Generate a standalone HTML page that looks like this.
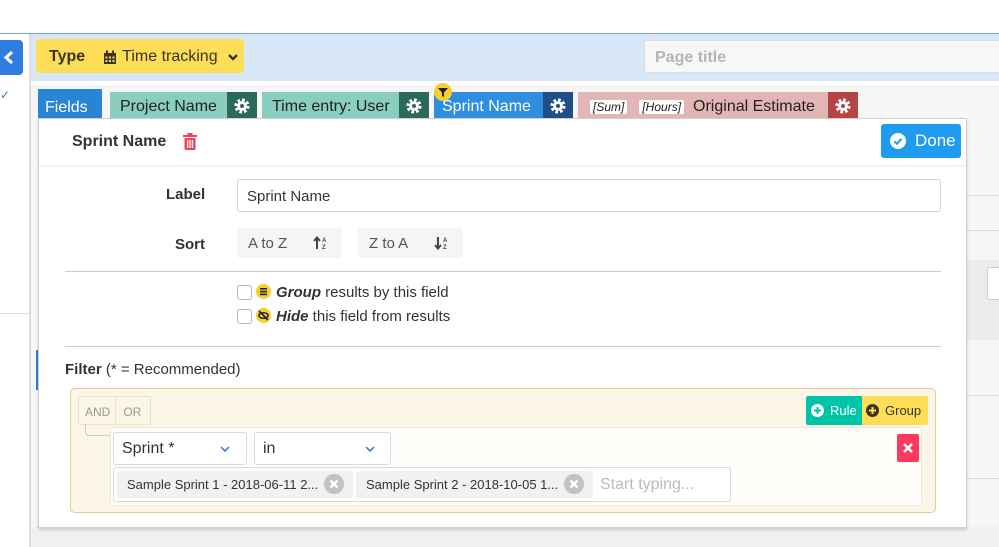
<!DOCTYPE html>
<html><head><meta charset="utf-8"><style>
*{box-sizing:border-box;margin:0;padding:0}
body{width:999px;height:547px;overflow:hidden;background:#fff;font-family:"Liberation Sans",sans-serif;color:#363636;position:relative}
.a{position:absolute}
.gear{display:flex;align-items:center;justify-content:center}
.tab{position:absolute;top:92px;height:27px;font-size:16px;display:flex;align-items:center;padding-left:10px;padding-top:3px;color:#222}
.btn{position:absolute;background:#f5f5f5;border-radius:3px;font-size:15px;color:#555;display:flex;align-items:center}
.sel{position:absolute;background:#fff;border:1px solid #dbdbdb;border-radius:3px;font-size:16px;display:flex;align-items:center;padding-left:8px;color:#333}
.chip{position:absolute;top:471px;height:27px;background:#f1f1f1;border-radius:3px;font-size:13px;color:#333;display:flex;align-items:center;padding-left:10px}
.x{position:absolute;width:19px;height:19px;border-radius:50%;background:#c2c2c2;color:#fff;font-size:13px;font-weight:bold;text-align:center;line-height:19px}
.cb{position:absolute;width:15px;height:15px;border:1px solid #b5b5b5;border-radius:3px;background:#fff}
</style></head><body>
<svg width="0" height="0" style="position:absolute"><defs>
<g id="g"><circle cx="8" cy="8" r="6" fill="none" stroke="#fff" stroke-width="3.2" stroke-dasharray="2.6 2.1"/><circle cx="8" cy="8" r="5" fill="#fff"/></g>
<path id="chev" d="M2 4 L6 8 L10 4" fill="none" stroke="#3273dc" stroke-width="1.5"/>
</defs></svg>
<!-- top -->
<div class="a" style="left:0;top:33px;width:999px;height:1px;background:#7aa6e0"></div>
<div class="a" style="left:30px;top:34px;width:969px;height:47px;background:#d8e7f7"></div>
<div class="a" style="left:0;top:40px;width:23px;height:35px;background:#2f7de1;border-radius:0 4px 4px 0"><svg width="23" height="35"><path d="M12 12 L6 17.5 L12 23" fill="none" stroke="#fff" stroke-width="3"/></svg></div>
<div class="a" style="left:0;top:88px;color:#2f7de1;font-size:12px">✓</div>
<div class="a" style="left:29px;top:34px;width:2px;height:513px;background:#ddd"></div>
<div class="a" style="left:0;top:313px;width:30px;height:1px;background:#ddd"></div>
<div class="a" style="left:36px;top:39px;width:208px;height:34px;background:#fedd58;border-radius:3px;font-size:16px;color:#3b3520;display:flex;align-items:center;padding-left:13px;padding-top:2px"><b>Type</b>
<svg style="margin-left:18px;margin-right:5px" width="14" height="15" viewBox="0 0 14 15"><rect x="1" y="3" width="12" height="11" fill="#3b3520"/><rect x="3" y="0.5" width="2" height="4" fill="#3b3520"/><rect x="9" y="0.5" width="2" height="4" fill="#3b3520"/><g fill="#fedd58"><rect x="2.5" y="6.5" width="2" height="2"/><rect x="6" y="6.5" width="2" height="2"/><rect x="9.5" y="6.5" width="2" height="2"/><rect x="2.5" y="10" width="2" height="2"/><rect x="6" y="10" width="2" height="2"/><rect x="9.5" y="10" width="2" height="2"/></g></svg>Time tracking
<svg style="margin-left:9px" width="12" height="10"><path d="M2 3 L6 7 L10 3" fill="none" stroke="#3b3520" stroke-width="2.4"/></svg></div>
<div class="a" style="left:644px;top:40px;width:360px;height:33px;background:#f7f7f7;border:1px solid #ddd;border-radius:3px;font-size:16px;color:#b5b5b5;font-weight:bold;padding:8px 0 0 10px">Page title</div>
<div class="a" style="left:31px;top:82px;width:968px;height:3px;background:#fff"></div>
<div class="a" style="left:31px;top:85px;width:968px;height:462px;background:#f6f6f6"></div>
<div class="a" style="left:966px;top:195px;width:33px;height:1px;background:#ddd"></div>
<div class="a" style="left:966px;top:230px;width:33px;height:1px;background:#ddd"></div>
<div class="a" style="left:966px;top:260px;width:33px;height:80px;background:#ececec"></div>
<div class="a" style="left:987px;top:267px;width:14px;height:33px;background:#fff;border:1px solid #ccc;border-radius:3px"></div>
<div class="a" style="left:966px;top:395px;width:33px;height:1px;background:#ddd"></div>
<div class="a" style="left:966px;top:478px;width:33px;height:1px;background:#ddd"></div>
<div class="a" style="left:31px;top:527px;width:968px;height:20px;background:#f0f0f0"></div>
<div class="a" style="left:36px;top:350px;width:3px;height:40px;background:#2f7de1"></div>
<!-- tabs -->
<div class="a" style="left:38px;top:89px;width:64px;height:32px;background:#2a84d6;color:#fff;font-size:16px;padding:10px 0 0 7px">Fields</div>
<div class="tab" style="left:110px;width:147px;background:#89cfc0">Project Name</div>
<div class="a gear" style="left:227px;top:92px;width:30px;height:27px;background:#2b6a5a"><svg width="16" height="16"><use href="#g"/><circle cx="8" cy="8" r="2" fill="#2b6a5a"/></svg></div>
<div class="tab" style="left:262px;width:167px;background:#89cfc0">Time entry: User</div>
<div class="a gear" style="left:399px;top:92px;width:30px;height:27px;background:#2b6a5a"><svg width="16" height="16"><use href="#g"/><circle cx="8" cy="8" r="2" fill="#2b6a5a"/></svg></div>
<div class="tab" style="left:434px;width:139px;background:#2f8ee0;color:#fff;padding-left:8px">Sprint Name</div>
<div class="a gear" style="left:543px;top:92px;width:30px;height:27px;background:#1f4f85"><svg width="16" height="16"><use href="#g"/><circle cx="8" cy="8" r="2" fill="#1f4f85"/></svg></div>
<div class="a" style="left:434px;top:83px;width:18px;height:18px;border-radius:50%;background:#f5cf2a"><svg width="18" height="18"><path d="M4 5 H14 L10 9.5 V14 L8 13 V9.5 Z" fill="#222"/></svg></div>
<div class="tab" style="left:578px;width:280px;background:#e3b6b6;padding-left:12px"><i style="font-size:12px;background:#fff;padding:0 3px;border-radius:2px">[Sum]</i><i style="font-size:12px;background:#fff;padding:0 3px;border-radius:2px;margin-left:12px">[Hours]</i><span style="margin-left:9px">Original Estimate</span></div>
<div class="a gear" style="left:828px;top:92px;width:30px;height:27px;background:#b54444"><svg width="16" height="16"><use href="#g"/><circle cx="8" cy="8" r="2" fill="#b54444"/></svg></div>
<!-- popup -->
<div class="a" style="left:38px;top:118px;width:929px;height:410px;background:#fff;border:1px solid #d0d0d0;box-shadow:0 2px 3px rgba(0,0,0,.15)"></div>
<div class="a" style="left:72px;top:133px;font-size:16px;font-weight:bold;color:#333">Sprint Name</div>
<svg class="a" style="left:182px;top:133px" width="16" height="17" viewBox="0 0 16 17"><rect x="1" y="2" width="14" height="2" fill="#f0405a"/><rect x="5.5" y="0" width="5" height="2.5" fill="#f0405a"/><path d="M2.5 5 H13.5 V15.5 Q13.5 17 12 17 H4 Q2.5 17 2.5 15.5 Z" fill="#f0405a"/><g fill="#fff"><rect x="5" y="7" width="1.3" height="8"/><rect x="7.4" y="7" width="1.3" height="8"/><rect x="9.8" y="7" width="1.3" height="8"/></g></svg>
<div class="a" style="left:881px;top:124px;width:80px;height:34px;background:#209cee;border-radius:3px;color:#fff;font-size:17px;display:flex;align-items:center;padding-left:9px"><svg width="16" height="16" style="margin-right:9px"><circle cx="8" cy="8" r="8" fill="#fff"/><path d="M4.5 8.3 L7 10.8 L11.5 5.8" fill="none" stroke="#209cee" stroke-width="2"/></svg>Done</div>
<div class="a" style="left:39px;top:165px;width:927px;height:2px;background:#f2f2f2"></div>
<div class="a" style="left:166px;top:186px;font-size:15px;font-weight:bold;color:#333">Label</div>
<div class="a" style="left:237px;top:179px;width:704px;height:33px;border:1px solid #d5d5d5;border-radius:3px;font-size:15px;padding:8px 0 0 9px;color:#333">Sprint Name</div>
<div class="a" style="left:175px;top:236px;font-size:15px;font-weight:bold;color:#333">Sort</div>
<div class="btn" style="left:237px;top:228px;width:105px;height:30px;padding-left:11px">A to Z<svg style="margin-left:26px" width="16" height="14"><path d="M4 13 V2 M1 5 L4 1.5 L7 5" fill="none" stroke="#444" stroke-width="2"/><text x="9" y="6" font-size="6" font-family="Liberation Sans" font-weight="bold" fill="#444">A</text><text x="9" y="13" font-size="6" font-family="Liberation Sans" font-weight="bold" fill="#444">Z</text></svg></div>
<div class="btn" style="left:358px;top:228px;width:105px;height:30px;padding-left:11px">Z to A<svg style="margin-left:26px" width="16" height="14"><path d="M4 1 V12 M1 9 L4 12.5 L7 9" fill="none" stroke="#444" stroke-width="2"/><text x="9" y="6" font-size="6" font-family="Liberation Sans" font-weight="bold" fill="#444">A</text><text x="9" y="13" font-size="6" font-family="Liberation Sans" font-weight="bold" fill="#444">Z</text></svg></div>
<div class="a" style="left:65px;top:271px;width:876px;height:1px;background:#ccc"></div>
<div class="cb" style="left:237px;top:285px"></div>
<svg class="a" style="left:256px;top:284px" width="15" height="15"><circle cx="7.5" cy="7.5" r="7.5" fill="#f5cf2a"/><g fill="#222"><rect x="4" y="4" width="7" height="1.6"/><rect x="4" y="6.8" width="7" height="1.6"/><rect x="4" y="9.6" width="7" height="1.6"/></g></svg>
<div class="a" style="left:276px;top:284px;font-size:15px;color:#333"><b><i>Group</i></b> results by this field</div>
<div class="cb" style="left:237px;top:309px"></div>
<svg class="a" style="left:256px;top:308px" width="15" height="15"><circle cx="7.5" cy="7.5" r="7.5" fill="#f5cf2a"/><ellipse cx="7.5" cy="7.5" rx="4.5" ry="2.8" fill="none" stroke="#222" stroke-width="1.5"/><path d="M3 3 L12 12" stroke="#222" stroke-width="1.6"/></svg>
<div class="a" style="left:276px;top:308px;font-size:15px;color:#333"><b><i>Hide</i></b> this field from results</div>
<div class="a" style="left:65px;top:346px;width:876px;height:1px;background:#ccc"></div>
<div class="a" style="left:65px;top:361px;font-size:15px;color:#333"><b>Filter</b> (* = Recommended)</div>
<!-- filter -->
<div class="a" style="left:70px;top:388px;width:866px;height:125px;background:#fcf6e8;border:1px solid #e3cd90;border-radius:5px"></div>
<div class="a" style="left:78px;top:396px;width:73px;height:29px;border:1px solid #eee3c8;border-radius:2px;font-size:12px;color:#999;display:flex"><span style="padding:8px 5px 0 6px;border-right:1px solid #eee3c8">AND</span><span style="padding:8px 0 0 7px">OR</span></div>
<div class="a" style="left:85px;top:424px;width:26px;height:12px;border-left:1px solid #ccc;border-bottom:1px solid #ccc;border-radius:0 0 0 4px"></div>
<div class="a" style="left:806px;top:396px;width:56px;height:29px;background:#00c4a7;color:#fff;font-size:13px;display:flex;align-items:center;padding-left:5px;border-radius:2px 0 0 2px"><svg width="13" height="13" style="margin-right:6px"><circle cx="6.5" cy="6.5" r="6.5" fill="#fff"/><path d="M6.5 3 V10 M3 6.5 H10" stroke="#00c4a7" stroke-width="2"/></svg>Rule</div>
<div class="a" style="left:862px;top:396px;width:66px;height:29px;background:#fedd58;color:#3b3520;font-size:13px;display:flex;align-items:center;padding-left:4px;border-radius:0 2px 2px 0"><svg width="13" height="13" style="margin-right:6px"><circle cx="6.5" cy="6.5" r="6.5" fill="#3b3520"/><path d="M6.5 3 V10 M3 6.5 H10" stroke="#fedd58" stroke-width="2"/></svg>Group</div>
<div class="a" style="left:110px;top:427px;width:812px;height:79px;background:#fffdf9;border:1px solid #efe8d8;border-radius:3px"></div>
<div class="sel" style="left:113px;top:432px;width:134px;height:33px">Sprint *<svg style="position:absolute;left:105px;top:10px" width="12" height="12"><use href="#chev"/></svg></div>
<div class="sel" style="left:254px;top:432px;width:137px;height:33px">in<svg style="position:absolute;left:109px;top:10px" width="12" height="12"><use href="#chev"/></svg></div>
<div class="a" style="left:897px;top:434px;width:22px;height:28px;background:#ff3860;border-radius:2px"><svg width="22" height="28"><path d="M7 10 L15 18 M15 10 L7 18" stroke="#fff" stroke-width="2.6"/></svg></div>
<div class="a" style="left:113px;top:467px;width:618px;height:35px;background:#fff;border:1px solid #dbdbdb;border-radius:3px"></div>
<div class="chip" style="left:117px;width:236px">Sample Sprint 1 - 2018-06-11 2...</div>
<svg class="a" style="left:324px;top:474px" width="20" height="20"><circle cx="10" cy="10" r="10" fill="#c2c2c2"/><path d="M6.5 6.5 L13.5 13.5 M13.5 6.5 L6.5 13.5" stroke="#fff" stroke-width="2.4"/></svg>
<div class="chip" style="left:356px;width:237px">Sample Sprint 2 - 2018-10-05 1...</div>
<svg class="a" style="left:564px;top:474px" width="20" height="20"><circle cx="10" cy="10" r="10" fill="#c2c2c2"/><path d="M6.5 6.5 L13.5 13.5 M13.5 6.5 L6.5 13.5" stroke="#fff" stroke-width="2.4"/></svg>
<div class="a" style="left:600px;top:476px;font-size:16px;color:#bbb">Start typing...</div>
</body></html>
